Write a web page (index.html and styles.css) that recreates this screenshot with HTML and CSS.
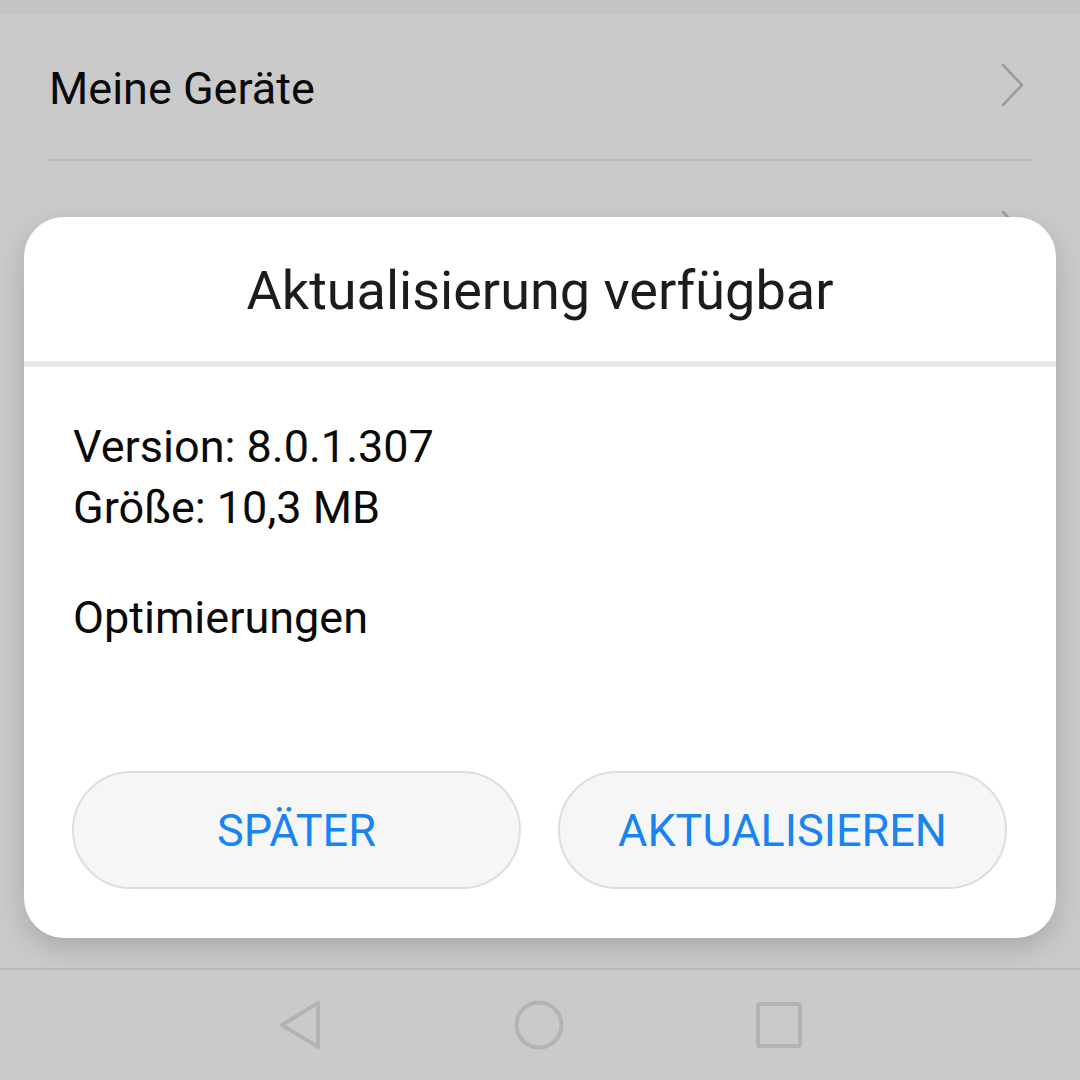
FILE: index.html
```html
<!DOCTYPE html>
<html lang="de">
<head>
    <meta charset="UTF-8">
    <meta name="viewport" content="width=device-width, initial-scale=1.0">
    <title>Aktualisierung verfügbar</title>
    <link rel="stylesheet" href="styles.css">
</head>
<body>

    <div class="screen">
        <div class="status-strip"></div>

        <div class="list">
            <div class="list-row">
                <span class="row-label">Meine Geräte</span>
                <svg class="chevron" width="26" height="44" viewBox="0 0 26 44">
                    <path d="M3 2 L22 22 L3 42" fill="none" stroke="#9c9c9c" stroke-width="2.6" stroke-linecap="round" stroke-linejoin="round"/>
                </svg>
            </div>
            <div class="list-row">
                <span class="row-label">Einstellungen</span>
                <svg class="chevron" width="26" height="44" viewBox="0 0 26 44">
                    <path d="M3 2 L22 22 L3 42" fill="none" stroke="#9c9c9c" stroke-width="2.6" stroke-linecap="round" stroke-linejoin="round"/>
                </svg>
            </div>
        </div>

        <div class="nav-bar">
            <svg class="nav-icon" width="46" height="52" viewBox="0 0 46 52">
                <path d="M41 4 L5 26 L41 48 Z" fill="none" stroke="#b3b3b3" stroke-width="4" stroke-linejoin="round"/>
            </svg>
            <svg class="nav-icon" width="52" height="52" viewBox="0 0 52 52">
                <circle cx="26" cy="26" r="22.5" fill="none" stroke="#b3b3b3" stroke-width="4"/>
            </svg>
            <svg class="nav-icon" width="48" height="48" viewBox="0 0 48 48">
                <rect x="3" y="3" width="42" height="42" rx="2" fill="none" stroke="#b3b3b3" stroke-width="4"/>
            </svg>
        </div>

        <div class="dialog">
            <div class="dialog-header">
                <h1 class="dialog-title">Aktualisierung verfügbar</h1>
            </div>
            <div class="dialog-body">
                <p class="info">Version: 8.0.1.307<br>Größe: 10,3 MB</p>
                <p class="info">Optimierungen</p>
            </div>
            <div class="dialog-actions">
                <button class="action">SPÄTER</button>
                <button class="action">AKTUALISIEREN</button>
            </div>
        </div>
    </div>

</body>
</html>
```

FILE: styles.css
```css
body {
    margin: 0;
    padding: 0;
    font-family: Roboto, "Noto Sans", sans-serif;
    background-color: #cacaca;
}

.screen {
    position: relative;
    width: 1080px;
    height: 1080px;
    display: flex;
    flex-direction: column;
    overflow: hidden;
}

.status-strip {
    height: 14px;
    background-color: #c4c4c4;
}

.list {
    flex: 1;
    padding: 0 48px;
}

.list-row {
    display: flex;
    align-items: center;
    justify-content: space-between;
    border-bottom: 2px solid #b9b9b9;
    box-sizing: border-box;
    height: 147px;
    padding-top: 4px;
}

.row-label {
    font-size: 45px;
    line-height: 60px;
    color: #0a0a0a;
    padding-left: 1px;
}

.chevron {
    margin-right: 6px;
    margin-top: -8px;
}

.nav-bar {
    height: 112px;
    border-top: 2px solid #b9b9b9;
    box-sizing: border-box;
    display: flex;
    justify-content: center;
    align-items: center;
    gap: 190px;
}

.dialog {
    position: absolute;
    left: 24px;
    top: 217px;
    width: 1032px;
    height: 721px;
    background-color: #ffffff;
    border-radius: 40px;
    box-shadow: 0 10px 26px rgba(0, 0, 0, 0.16);
    display: flex;
    flex-direction: column;
    overflow: hidden;
}

.dialog-header {
    box-sizing: border-box;
    height: 150px;
    display: flex;
    align-items: center;
    justify-content: center;
    border-bottom: 6px solid #e7e7e7;
    padding-top: 4px;
}

.dialog-title {
    margin: 0;
    font-size: 54px;
    font-weight: normal;
    line-height: 60px;
    color: #1c1c1c;
}

.dialog-body {
    padding: 49px 49px 0;
}

.info {
    margin: 0 0 49px;
    font-size: 45px;
    line-height: 61px;
    color: #0a0a0a;
}

.dialog-actions {
    margin-top: auto;
    padding: 0 49px 49px 48px;
    display: flex;
    gap: 37px;
}

.action {
    flex: 1;
    height: 118px;
    border: 2px solid #dedede;
    border-radius: 59px;
    background-color: #f6f6f6;
    font-family: Roboto, "Noto Sans", sans-serif;
    font-size: 45px;
    color: #1784f2;
    cursor: pointer;
}
```
